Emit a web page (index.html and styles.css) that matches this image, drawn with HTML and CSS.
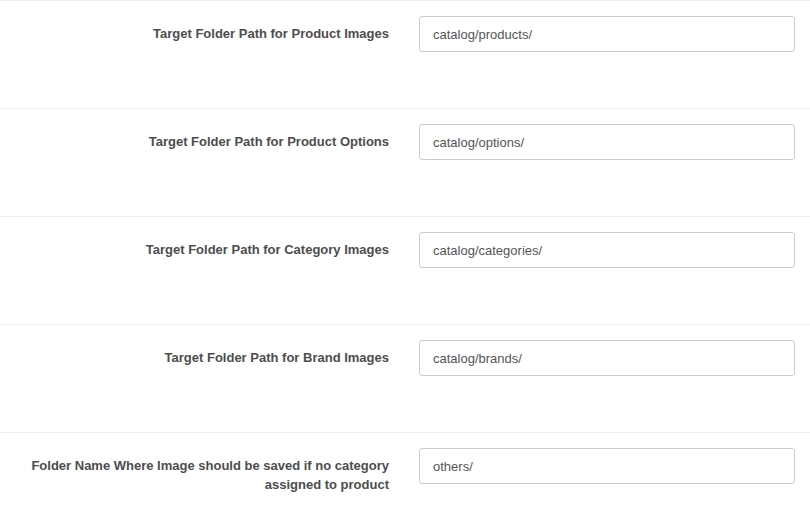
FILE: index.html
```html
<!DOCTYPE html>
<html>
<head>
<meta charset="utf-8">
<link rel="stylesheet" href="styles.css">
</head>
<body>
<form class="settings">
  <div class="row">
    <label class="label">Target Folder Path for Product Images</label>
    <div class="field"><input class="input" type="text" value="catalog/products/"></div>
  </div>
  <div class="row">
    <label class="label">Target Folder Path for Product Options</label>
    <div class="field"><input class="input" type="text" value="catalog/options/"></div>
  </div>
  <div class="row">
    <label class="label">Target Folder Path for Category Images</label>
    <div class="field"><input class="input" type="text" value="catalog/categories/"></div>
  </div>
  <div class="row">
    <label class="label">Target Folder Path for Brand Images</label>
    <div class="field"><input class="input" type="text" value="catalog/brands/"></div>
  </div>
  <div class="row">
    <label class="label">Folder Name Where Image should be saved if no category assigned to product</label>
    <div class="field"><input class="input" type="text" value="others/"></div>
  </div>
</form>
</body>
</html>
```
FILE: styles.css
```css
html, body {
  margin: 0;
  padding: 0;
  background: #fff;
}
body {
  font-family: "Liberation Sans", Arial, sans-serif;
  font-size: 13px;
  line-height: 1.42857;
  color: #555;
}
.settings {
  display: flex;
  flex-direction: column;
}
.row {
  display: grid;
  grid-template-columns: 404px 1fr;
  border-top: 1px solid #ededed;
  height: 107px;
  box-sizing: content-box;
}
.label {
  padding: 24px 15px 0 15px;
  text-align: right;
  font-weight: bold;
  color: #4d4d4d;
}
.field {
  padding: 15px 15px 0 15px;
}
.input {
  display: block;
  width: 100%;
  box-sizing: border-box;
  height: 36px;
  padding: 8px 13px;
  font-family: "Liberation Sans", Arial, sans-serif;
  font-size: 13px;
  color: #555;
  border: 1px solid #ccc;
  border-radius: 3px;
  background: #fff;
  outline: none;
}
```
